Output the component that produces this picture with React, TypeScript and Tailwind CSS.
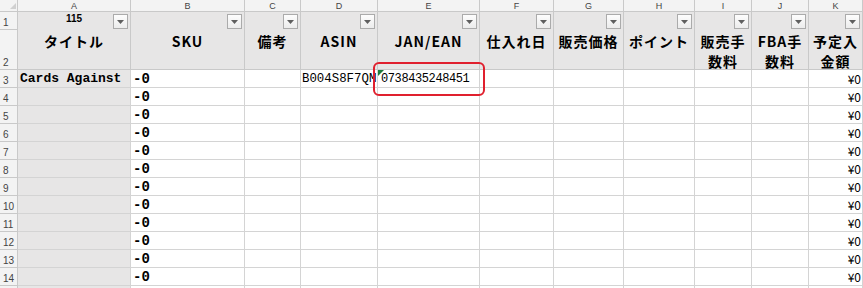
import React from "react";

const COLS = ["A", "B", "C", "D", "E", "F", "G", "H", "I", "J", "K"];

const HEADERS: string[][] = [
  ["タイトル"],
  ["SKU"],
  ["備考"],
  ["ASIN"],
  ["JAN/EAN"],
  ["仕入れ日"],
  ["販売価格"],
  ["ポイント"],
  ["販売手", "数料"],
  ["FBA手", "数料"],
  ["予定入", "金額"],
];

const JP = "[font-family:'Noto_Sans_CJK_JP','Liberation_Sans',sans-serif]";
const SANS = "[font-family:'Liberation_Sans',Arial,sans-serif]";
const MONO = "[font-family:'Liberation_Mono','Noto_Sans_CJK_JP',monospace]";

function FilterBtn() {
  return (
    <div className="absolute right-[2px] bottom-[1px] w-[15px] h-[15px] border border-[#ababab] bg-gradient-to-b from-[#fdfdfd] to-[#ececec] flex items-center justify-center">
      <svg width="7" height="4" viewBox="0 0 7 4">
        <path d="M0 0 H7 L3.5 4 Z" fill="#5f5f5f" />
      </svg>
    </div>
  );
}

function RowHead({ n, last }: { n?: number; last?: boolean }) {
  return (
    <div
      className={`bg-[#f3f3f3] border-r ${last ? "" : "border-b"} border-[#c9c9c9] flex items-end pl-[3px] pb-[1px] text-[10px] leading-[11px] text-[#444] ${SANS}`}
    >
      {n}
    </div>
  );
}

export default function App() {
  const rows = Array.from({ length: 12 }, (_, i) => i + 3);
  return (
    <div className="w-[863px] h-[288px] overflow-hidden bg-white relative select-none">
      <div className="grid grid-cols-[18px_113px_114px_56px_77px_102px_74px_70px_71px_57px_57px_54px] grid-rows-[12px_18px_40px_repeat(13,18px)]">
        {/* column header row */}
        <div className="relative bg-[#f3f3f3] border-r border-b border-[#c9c9c9]">
          <svg className="absolute right-[1px] bottom-[2px]" width="6" height="6" viewBox="0 0 6 6">
            <path d="M6 0 V6 H0 Z" fill="#d0d0d0" />
          </svg>
        </div>
        {COLS.map((c) => (
          <div
            key={c}
            className={`bg-[#f3f3f3] border-r border-b border-[#c9c9c9] flex items-center justify-center text-[9px] leading-[10px] text-[#444] ${SANS}`}
          >
            {c}
          </div>
        ))}

        {/* row 1 */}
        <RowHead n={1} />
        {COLS.map((c, i) => (
          <div key={c} className="relative bg-[#e7e6e6] border-r border-[#c9c9c9]">
            {i === 0 && (
              <div className={`absolute inset-x-0 top-[2px] text-center text-[10px] font-bold leading-[10px] text-black ${SANS}`}>
                115
              </div>
            )}
            <FilterBtn />
          </div>
        ))}

        {/* row 2 */}
        <RowHead n={2} />
        {HEADERS.map((h, i) => (
          <div
            key={i}
            className={`bg-[#e7e6e6] border-r border-b border-[#c9c9c9] flex flex-col items-center pt-[1px] text-[14px] font-bold leading-[20px] text-black whitespace-nowrap overflow-hidden ${JP}`}
          >
            {h.map((l, j) => (
              <div key={j} className="tracking-[1px]">
                {l}
              </div>
            ))}
          </div>
        ))}

        {/* data rows */}
        {rows.map((r) => (
          <React.Fragment key={r}>
            <RowHead n={r} />
            {COLS.map((c, i) => {
              const bg = i === 0 ? "bg-[#e7e6e6]" : "bg-white";
              let content: React.ReactNode = null;
              if (i === 0 && r === 3)
                content = (
                  <span className={`pl-[2px] text-[13px] font-bold text-black whitespace-nowrap ${MONO}`}>
                    Cards Against
                  </span>
                );
              if (i === 1)
                content = (
                  <span className={`pl-[2px] text-[14px] font-bold text-black ${MONO}`}>-0</span>
                );
              if (i === 3 && r === 3)
                content = (
                  <span className={`pl-[1px] text-[12.4px] text-black whitespace-nowrap ${MONO}`}>
                    B004S8F7QM
                  </span>
                );
              if (i === 4 && r === 3)
                content = (
                  <span className={`pl-[3px] text-[12px] tracking-[-0.4px] text-black whitespace-nowrap ${MONO}`}>
                    0738435248451
                  </span>
                );
              if (i === 10)
                content = (
                  <span className={`ml-auto pr-[1px] text-[12px] text-black whitespace-nowrap ${JP}`}>¥0</span>
                );
              return (
                <div
                  key={c}
                  className={`relative ${bg} border-r border-b border-[#d4d4d4] flex items-end leading-[16px] overflow-hidden`}
                >
                  {i === 4 && r === 3 && (
                    <svg className="absolute left-0 top-0" width="6" height="6" viewBox="0 0 6 6">
                      <path d="M0 0 H6 L0 6 Z" fill="#1e7a3c" />
                    </svg>
                  )}
                  {content}
                </div>
              );
            })}
          </React.Fragment>
        ))}

        {/* partial row 15 */}
        <RowHead last />
        {COLS.map((c, i) => (
          <div key={c} className={`${i === 0 ? "bg-[#e7e6e6]" : "bg-white"} border-r border-[#d4d4d4]`} />
        ))}
      </div>

      {/* red highlight */}
      <div className="absolute left-[373px] top-[62px] w-[112px] h-[34px] border-2 border-[#e0202e] rounded-[6px] pointer-events-none" />
    </div>
  );
}
